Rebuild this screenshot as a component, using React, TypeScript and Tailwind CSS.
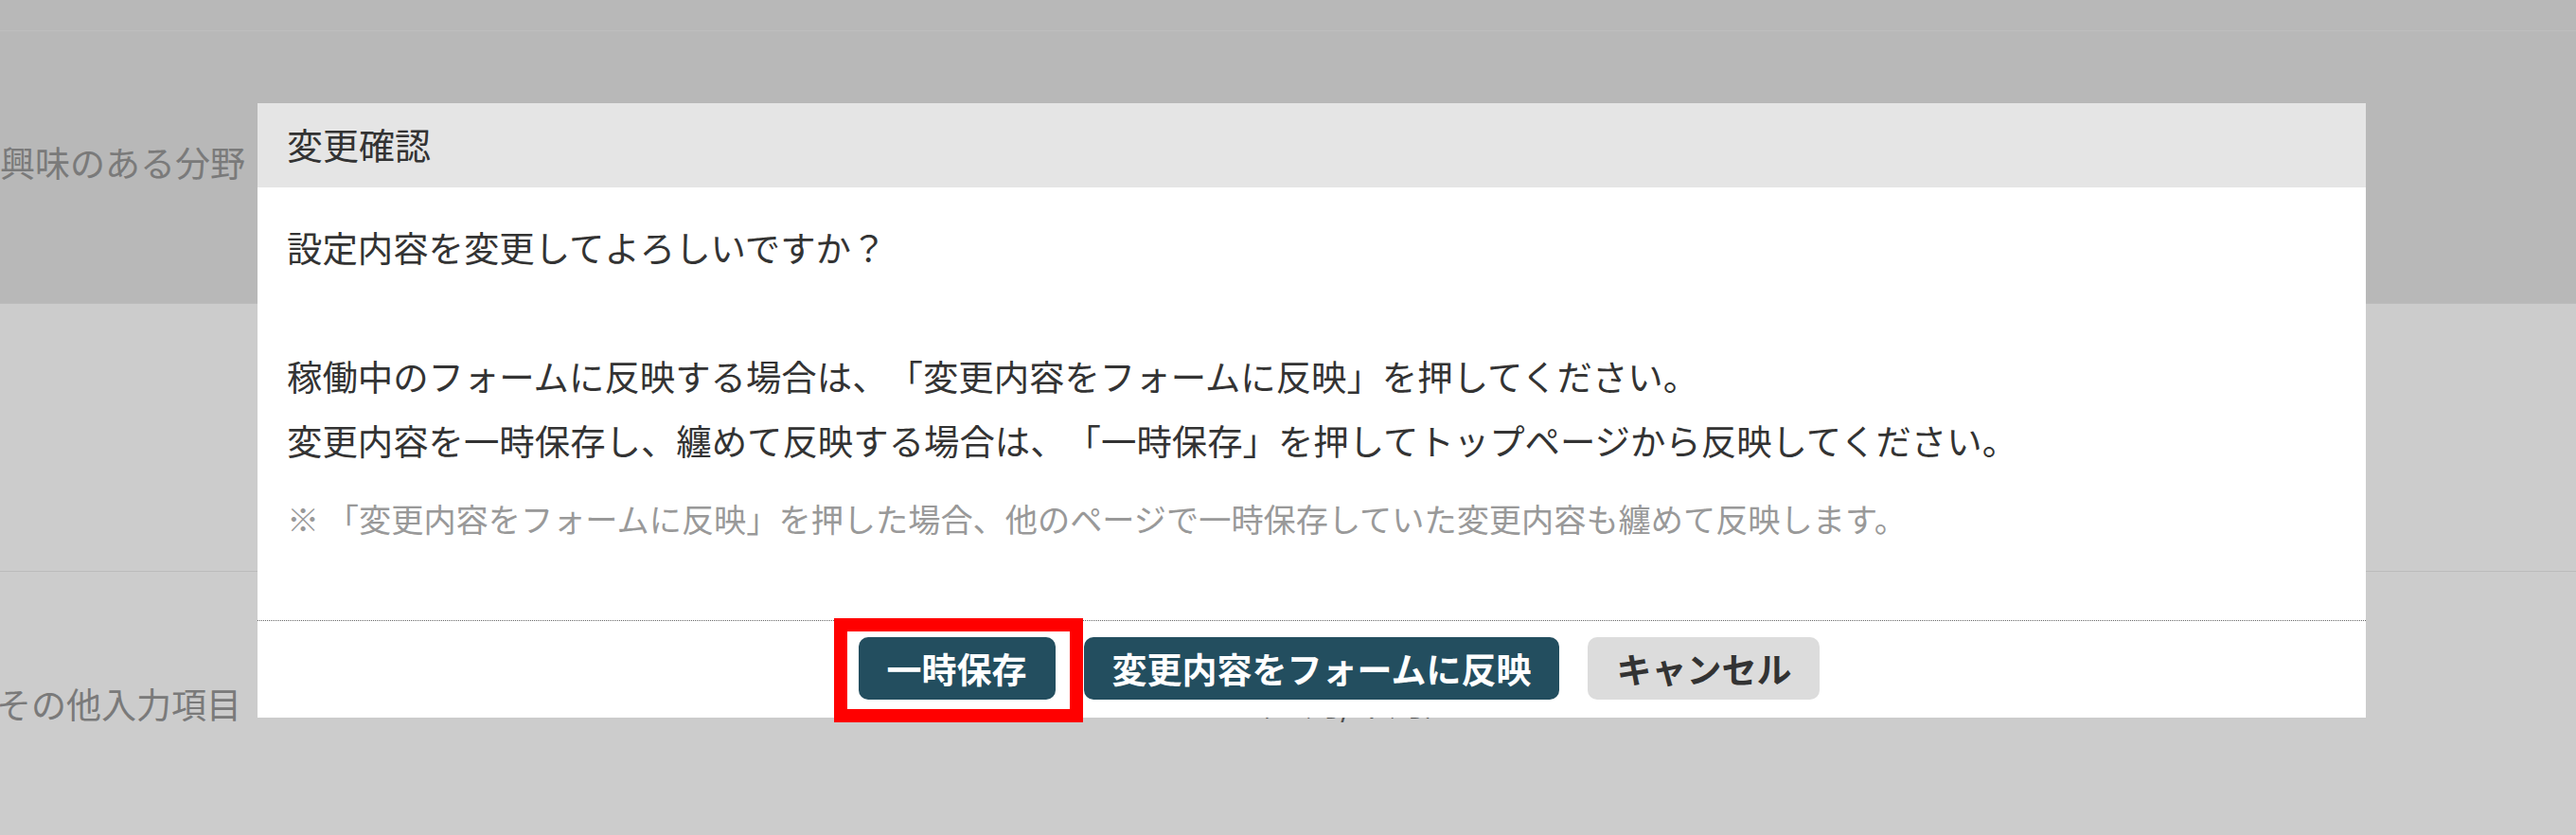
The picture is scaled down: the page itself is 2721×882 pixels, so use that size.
import React from 'react';

const btnBase =
  "inline-flex h-[66px] items-center justify-center rounded-[10px] px-[30px] text-[37px] font-bold leading-none whitespace-nowrap";

function ConfirmDialog() {
  return (
    <div className="absolute left-[272px] top-[109px] w-[2227px] bg-white text-[#333]">
      <div className="flex h-[89px] items-center bg-[#e5e5e5] px-[31px] pb-[4px] text-[38px]">
        変更確認
      </div>

      <div className="px-[31px] pt-[29px] pb-[83px]">
        <div className="text-[37.4px] leading-[68px] whitespace-nowrap">
          <p>設定内容を変更してよろしいですか？</p>
          <p>&nbsp;</p>
          <p>稼働中のフォームに反映する場合は、「変更内容をフォームに反映」を押してください。</p>
          <p>変更内容を一時保存し、纏めて反映する場合は、「一時保存」を押してトップページから反映してください。</p>
        </div>
        <p className="mt-[23px] text-[34.2px] leading-[50px] whitespace-nowrap text-[#999]">
          ※ 「変更内容をフォームに反映」を押した場合、他のページで一時保存していた変更内容も纏めて反映します。
        </p>
      </div>

      <div className="flex justify-center gap-[30px] border-t border-dotted border-[#666] pt-[17px] pb-[19px] pl-[58px]">
        <div className="relative">
          <button type="button" className={`${btnBase} bg-[#234e5f] text-white`}>
            一時保存
          </button>
          <span className="pointer-events-none absolute -left-[26px] -right-[29px] -top-[20px] -bottom-[24px] border-[14px] border-[#ff0000]" />
        </div>
        <button type="button" className={`${btnBase} bg-[#234e5f] text-white`}>
          変更内容をフォームに反映
        </button>
        <button type="button" className={`${btnBase} bg-[#dcdcdc] text-[#333]`}>
          キャンセル
        </button>
      </div>
    </div>
  );
}

export default function App() {
  return (
    <div className="relative h-[882px] w-[2721px] overflow-hidden bg-white font-['Noto_Sans_CJK_JP',sans-serif] [text-spacing-trim:space-all]">
      {/* page behind the dialog */}
      <div className="h-[33px] border-b border-[#eeeeee] bg-[#e7e7e7]" />
      <div className="flex h-[287px] items-center bg-[#e6e6e6] pb-[10px]">
        <div className="w-[255px] text-right text-[37px] leading-none whitespace-nowrap text-[#999]">
          興味のある分野
        </div>
      </div>
      <div className="h-[284px] border-t border-b border-[#ececec] bg-white" />
      <div className="flex h-[278px] bg-white">
        <div className="flex w-[255px] items-center justify-end text-[37px] leading-none whitespace-nowrap text-[#999]">
          その他入力項目
        </div>
        <div className="pl-[1050px] pt-[118px] text-[37px] leading-none whitespace-nowrap text-[#666]">
          （全角/半角）
        </div>
      </div>

      {/* overlay */}
      <div className="absolute inset-0 bg-black/20" />

      <ConfirmDialog />
    </div>
  );
}
